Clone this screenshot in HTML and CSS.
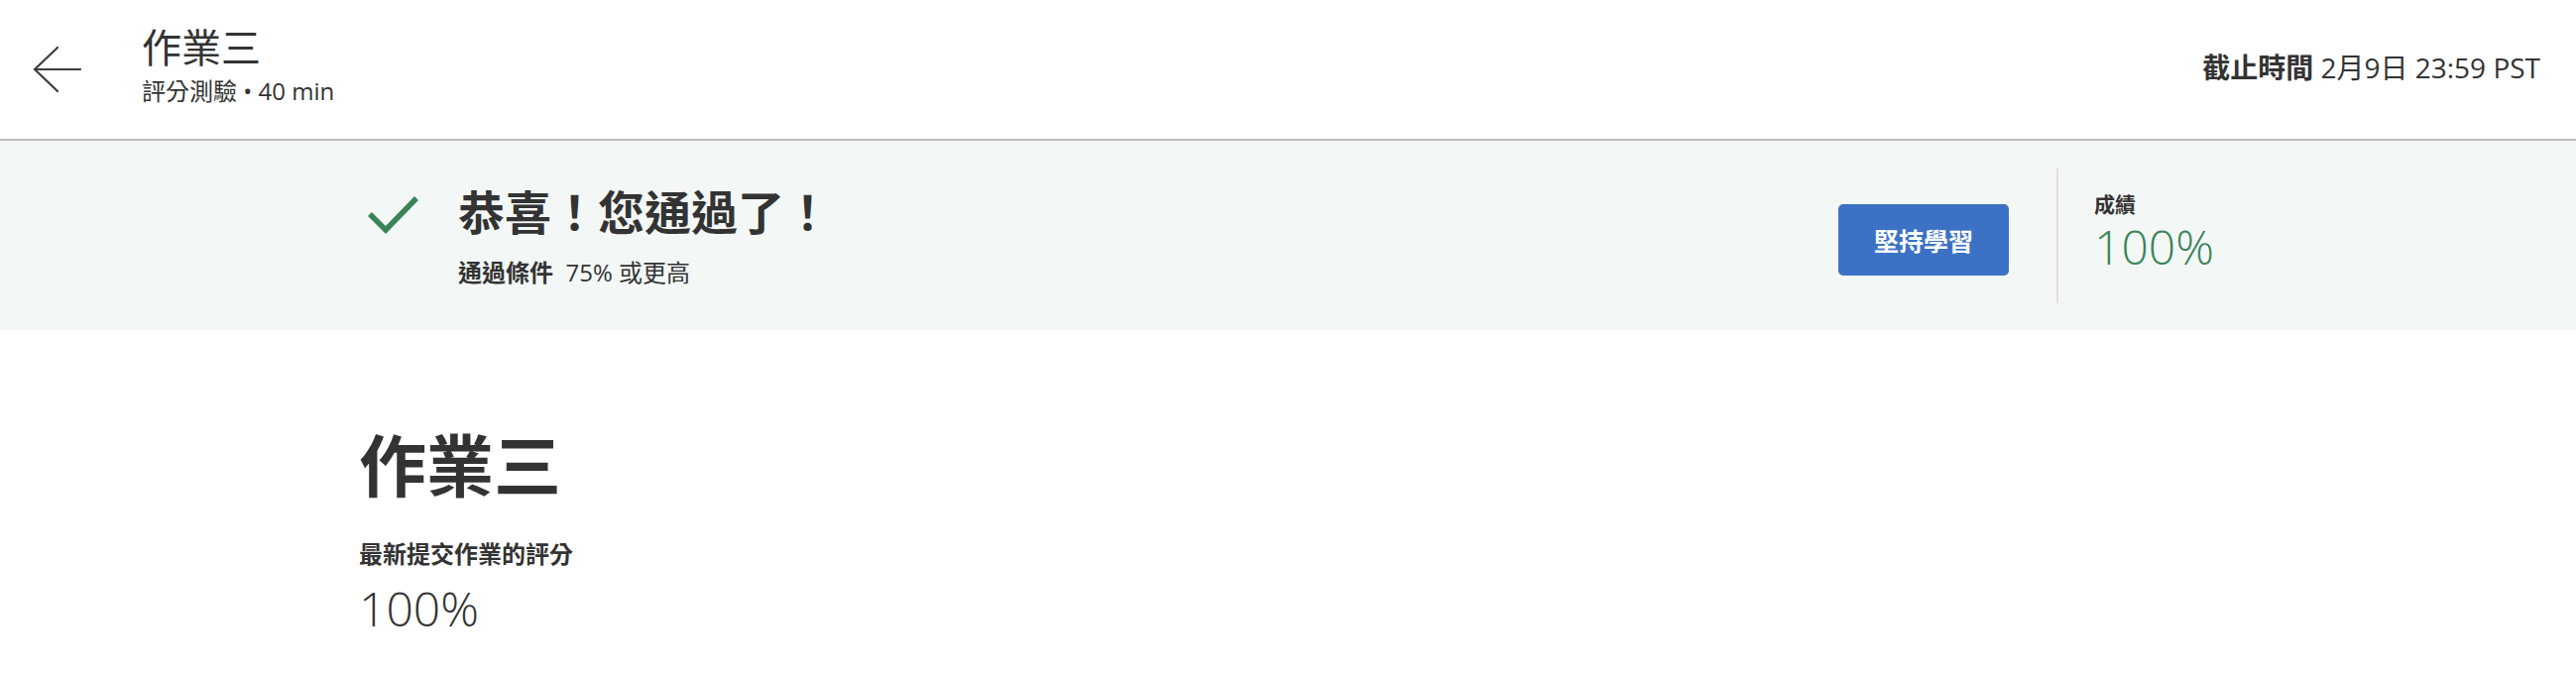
FILE: index.html
```html
<!DOCTYPE html>
<html lang="zh-Hant">
<head>
<meta charset="utf-8">
<title>作業三</title>
<link rel="stylesheet" href="styles.css">
</head>
<body>
<header class="topbar">
  <a class="back" href="#" aria-label="返回">
    <svg width="48" height="48" viewBox="0 0 48 48" fill="none" stroke="#3a3a40" stroke-width="2.2" stroke-linecap="round" stroke-linejoin="round">
      <path d="M1 24 H47"/>
      <path d="M24 2 L1 24 L24 46"/>
    </svg>
  </a>
  <div class="title-block">
    <div class="page-title">作業三</div>
    <div class="page-sub">評分測驗 • 40 min</div>
  </div>
  <div class="deadline"><strong>截止時間</strong> 2月9日 23:59 PST</div>
</header>

<section class="banner">
  <div class="banner-inner">
    <div class="result">
      <svg class="check" width="56" height="44" viewBox="0 0 56 44" fill="none" stroke="#3a8458" stroke-width="5.5">
        <path d="M5 22 L21 38 L52 6"/>
      </svg>
      <div class="result-text">
        <h2 class="congrats">恭喜！您通過了！</h2>
        <div class="criteria"><strong>通過條件</strong>&nbsp; 75% 或更高</div>
      </div>
    </div>
    <button class="keep" type="button">堅持學習</button>
    <div class="grade">
      <div class="grade-label">成績</div>
      <div class="grade-value">100%</div>
    </div>
  </div>
</section>

<main class="content">
  <h1 class="big-title">作業三</h1>
  <div class="latest-label">最新提交作業的評分</div>
  <div class="latest-value">100%</div>
</main>
</body>
</html>
```

FILE: styles.css
```css
* { box-sizing: border-box; }

body {
  margin: 0;
  background: #ffffff;
  color: #333333;
  font-family: "Open Sans", "Noto Sans CJK TC", sans-serif;
}

.topbar {
  height: 142px;
  display: flex;
  align-items: center;
  padding: 0 36px 0 34px;
  border-bottom: 2px solid #bdbdbd;
}

.back {
  display: flex;
  width: 48px;
  height: 48px;
}

.title-block {
  margin-left: 61px;
  display: flex;
  flex-direction: column;
  margin-top: -8px;
}

.page-title {
  font-size: 40px;
  line-height: 46px;
  font-weight: 400;
  color: #333;
}

.page-sub {
  font-size: 24px;
  line-height: 32px;
  margin-top: 5px;
  color: #333;
}

.deadline {
  margin-left: auto;
  font-size: 28px;
  color: #333;
  margin-top: -6px;
}

.deadline strong { font-weight: 600; }

.banner {
  height: 191px;
  background: #f3f8f6;
}

.banner-inner {
  width: 1874px;
  height: 100%;
  margin: 0 auto;
  display: flex;
  align-items: center;
}

.result {
  flex: 1;
  display: flex;
  align-items: flex-start;
}

.check {
  margin-left: 6px;
  margin-top: 8px;
}

.result-text {
  margin-left: 38px;
}

.congrats {
  margin: 0;
  font-size: 47px;
  line-height: 56px;
  font-weight: 700;
  color: #333;
}

.criteria {
  margin-top: 18px;
  font-size: 24px;
  line-height: 30px;
  color: #333;
}

.criteria strong { font-weight: 700; }

.keep {
  width: 172px;
  height: 72px;
  margin-top: 8px;
  border: none;
  border-radius: 5px;
  background: #3b72c5;
  color: #ffffff;
  font-family: "Open Sans", "Noto Sans CJK TC", sans-serif;
  font-size: 25px;
  font-weight: 700;
}

.grade {
  margin-left: 48px;
  width: 162px;
  height: 136px;
  border-left: 2px solid #e0e0e0;
  padding-left: 36px;
  padding-top: 22px;
}

.grade-label {
  font-size: 21px;
  line-height: 28px;
  font-weight: 700;
  color: #333;
}

.grade-value {
  font-size: 48px;
  line-height: 58px;
  font-weight: 300;
  color: #3a8458;
}

.content {
  width: 1874px;
  margin: 0 auto;
  padding-top: 94px;
}

.big-title {
  margin: 0;
  font-size: 68px;
  line-height: 86px;
  font-weight: 700;
  color: #333;
}

.latest-label {
  margin-top: 30px;
  font-size: 24px;
  line-height: 32px;
  font-weight: 700;
  color: #333;
}

.latest-value {
  margin-top: 10px;
  font-size: 48px;
  line-height: 58px;
  font-weight: 300;
  color: #333;
}
```
